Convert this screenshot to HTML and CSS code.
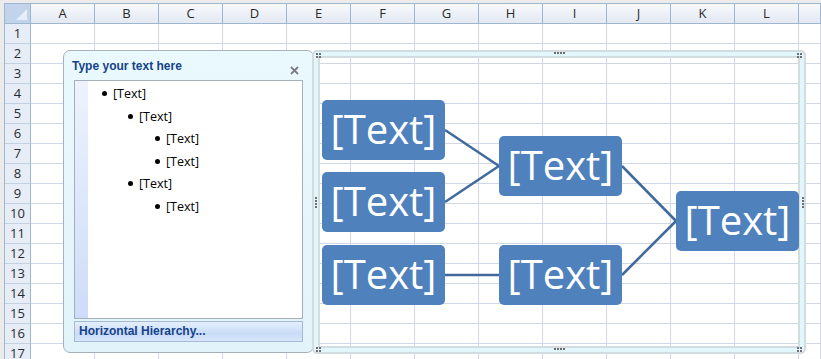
FILE: index.html
```html
<!DOCTYPE html>
<html lang="en">
<head>
    <meta charset="UTF-8">
    <title>SmartArt - Horizontal Hierarchy</title>
    <link rel="stylesheet" href="styles.css">
</head>
<body>
<div class="sheet">
    <div class="corner"></div>
    <div class="colhead">A</div>
    <div class="colhead">B</div>
    <div class="colhead">C</div>
    <div class="colhead">D</div>
    <div class="colhead">E</div>
    <div class="colhead">F</div>
    <div class="colhead">G</div>
    <div class="colhead">H</div>
    <div class="colhead">I</div>
    <div class="colhead">J</div>
    <div class="colhead">K</div>
    <div class="colhead">L</div>
    <div class="colhead"></div>
</div>

<!-- text pane floating over the cells -->
<div class="textpane">
    <div class="pane-title">
        <span>Type your text here</span>
        <svg class="pane-close" width="9" height="9" viewBox="0 0 9 9">
            <path d="M1 1 L8 8 M8 1 L1 8" stroke="#7a7e82" stroke-width="1.8"/>
        </svg>
    </div>
    <div class="pane-list">
        <div class="pane-strip"></div>
        <ul>
            <li class="lvl1">[Text]</li>
            <li class="lvl2">[Text]</li>
            <li class="lvl3">[Text]</li>
            <li class="lvl3">[Text]</li>
            <li class="lvl2">[Text]</li>
            <li class="lvl3">[Text]</li>
        </ul>
    </div>
    <div class="pane-footer">Horizontal Hierarchy...</div>
</div>

<!-- smartart graphic frame -->
<div class="frame">
    <div class="ring"></div>
    <span class="handle h-tl"></span>
    <span class="handle h-tr"></span>
    <span class="handle h-bl"></span>
    <span class="handle h-br"></span>
    <span class="handle h-top"></span>
    <span class="handle h-bottom"></span>
    <span class="handle h-left"></span>
    <span class="handle h-right"></span>

    <svg class="links" width="494" height="304" viewBox="0 0 494 304">
        <g stroke="#41699c" stroke-width="2.5" fill="none">
            <line x1="133" y1="80" x2="187" y2="116"/>
            <line x1="133" y1="152" x2="187" y2="116"/>
            <line x1="133" y1="225" x2="187" y2="225"/>
            <line x1="310" y1="116" x2="364" y2="171"/>
            <line x1="310" y1="225" x2="364" y2="171"/>
        </g>
    </svg>

    <div class="node" style="left:10px;top:50px">[Text]</div>
    <div class="node" style="left:10px;top:122px">[Text]</div>
    <div class="node" style="left:10px;top:195px">[Text]</div>
    <div class="node" style="left:187px;top:86px">[Text]</div>
    <div class="node" style="left:187px;top:195px">[Text]</div>
    <div class="node" style="left:364px;top:141px">[Text]</div>
</div>

<script>
    (function () {
        var sheet = document.querySelector('.sheet');
        var html = '';
        for (var r = 1; r <= 17; r++) {
            html += '<div class="rowhead">' + r + '</div>';
            for (var c = 0; c < 13; c++) {
                html += '<div class="cell"></div>';
            }
        }
        sheet.insertAdjacentHTML('beforeend', html);
    })();
</script>
</body>
</html>
```

FILE: styles.css
```css
*{ margin:0; padding:0; box-sizing:border-box;}
html,body{
    width: 821px;
    height: 359px;
    overflow: hidden;
}
body{
    background: #ebebeb;
    font-family: "Open Sans", "Liberation Sans", sans-serif;
    position: relative;
}

/* ---------- worksheet grid ---------- */
.sheet{
    margin: 3px 0 0 4px;
    border-left: 1px solid #9eb6ce;
    border-top: 1px solid #9eb6ce;
    display: grid;
    grid-template-columns: 26px repeat(12, 64px) 1fr;
    grid-auto-rows: 20px;
    background: #fff;
}
.corner{
    background: #c2d4eb;
    border-right: 1px solid #9eb6ce;
    border-bottom: 1px solid #9eb6ce;
    position: relative;
}
.corner:after{
    content: "";
    position: absolute;
    right: 3px;
    bottom: 3px;
    width: 11px;
    height: 11px;
    background: #e6eef9;
    clip-path: polygon(100% 0, 100% 100%, 0 100%);
}
.colhead{
    background: linear-gradient(#f7f9fc, #e3e9f2);
    border-right: 1px solid #9eb6ce;
    border-bottom: 1px solid #9eb6ce;
    text-align: center;
    font-size: 13px;
    line-height: 19px;
    color: #2a2a2a;
}
.rowhead{
    background: #e6edf7;
    border-right: 1px solid #9eb6ce;
    border-bottom: 1px solid #c2d1e4;
    text-align: center;
    font-size: 13px;
    line-height: 19px;
    color: #2a2a2a;
}
.cell{
    border-right: 1px solid #d0d7e5;
    border-bottom: 1px solid #d0d7e5;
}

/* ---------- text pane ---------- */
.textpane{
    position: absolute;
    left: 63px;
    top: 50px;
    width: 251px;
    height: 303px;
    border: 1px solid #a7b1bb;
    border-radius: 7px;
    background: linear-gradient(#eaf9fd, #e2f3fa);
    display: flex;
    flex-direction: column;
    padding: 0 10px 10px 10px;
}
.pane-title{
    height: 29px;
    display: flex;
    align-items: center;
    justify-content: space-between;
    font-family: "Liberation Sans", Arial, sans-serif;
    font-size: 12px;
    font-weight: bold;
    color: #15428b;
}
.pane-title span{ margin-left: -2px; margin-top: 1px;}
.pane-close{ margin-top: 10px; margin-right: 4px;}
.pane-list{
    flex: 1;
    background: #fff;
    border: 1px solid #a4afba;
    display: flex;
}
.pane-strip{
    width: 13px;
    background: linear-gradient(#edf3fd, #cddcf8);
}
.pane-list ul{
    list-style: none;
    padding-top: 2px;
    font-size: 12.5px;
    line-height: 22.5px;
    color: #000;
}
.pane-list li:before{
    content: "";
    display: inline-block;
    width: 5px;
    height: 5px;
    border-radius: 50%;
    background: #000;
    margin-right: 6px;
    vertical-align: 2px;
}
.lvl1{ padding-left: 14px;}
.lvl2{ padding-left: 40px;}
.lvl3{ padding-left: 67px;}
.pane-footer{
    margin-top: 2px;
    height: 21px;
    border: 1px solid #a5b9d2;
    background: linear-gradient(#e4effd, #c9dcf7 60%, #d6e5fa);
    font-family: "Liberation Sans", Arial, sans-serif;
    font-size: 12px;
    font-weight: bold;
    line-height: 19px;
    color: #15428b;
    padding-left: 4px;
}

/* ---------- smartart frame ---------- */
.frame{
    position: absolute;
    left: 312px;
    top: 50px;
    width: 494px;
    height: 304px;
}
.ring{
    position: absolute;
    inset: 0;
    border: 2px solid #d2dcdf;
    border-radius: 5px;
    box-shadow: inset 0 0 0 4px #e2f7fb, inset 0 0 0 6px #d3dde0;
}
.handle{
    position: absolute;
    width: 2px;
    height: 2px;
    background: #6f6f6f;
}
.h-tl{ left: 4px; top: 3px; box-shadow: 3px 0 #6f6f6f, 0 3px #6f6f6f, 3px 3px #6f6f6f;}
.h-tr{ left: 485px; top: 3px; box-shadow: 3px 0 #6f6f6f, 0 3px #6f6f6f, 3px 3px #6f6f6f;}
.h-bl{ left: 4px; top: 297px; box-shadow: 3px 0 #6f6f6f, 0 3px #6f6f6f, 3px 3px #6f6f6f;}
.h-br{ left: 485px; top: 297px; box-shadow: 3px 0 #6f6f6f, 0 3px #6f6f6f, 3px 3px #6f6f6f;}
.h-top{ left: 242px; top: 2px; box-shadow: 3px 0 #6f6f6f, 6px 0 #6f6f6f, 9px 0 #6f6f6f;}
.h-bottom{ left: 242px; top: 298px; box-shadow: 3px 0 #6f6f6f, 6px 0 #6f6f6f, 9px 0 #6f6f6f;}
.h-left{ left: 3px; top: 147px; box-shadow: 0 3px #6f6f6f, 0 6px #6f6f6f, 0 9px #6f6f6f;}
.h-right{ left: 490px; top: 147px; box-shadow: 0 3px #6f6f6f, 0 6px #6f6f6f, 0 9px #6f6f6f;}
.links{
    position: absolute;
    left: 0;
    top: 0;
}
.node{
    position: absolute;
    width: 123px;
    height: 60px;
    background: #4f81bd;
    border-radius: 5px;
    color: #fff;
    font-size: 40px;
    line-height: 58px;
    text-align: center;
}
```
